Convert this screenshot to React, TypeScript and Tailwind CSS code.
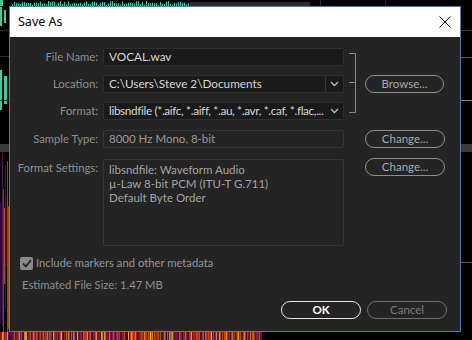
import React from "react";

// tiny deterministic noise so the background stripes look the same every run
function noise(i: number) {
  const x = Math.sin(i * 12.9898 + 78.233) * 43758.5453;
  return x - Math.floor(x);
}

const heat = ["#f5a623", "#e8541c", "#b3124d", "#7a1a6e", "#ff8a1f", "#d93a1a", "#4a1460"];

function TopStrip() {
  const spikes = Array.from({ length: 90 }, (_, i) => i);
  return (
    <svg width="472" height="6" className="block">
      <rect width="472" height="6" fill="#000" />
      <rect x="0" y="0" width="3" height="6" fill="#3fc9a0" />
      {spikes.map((i) => {
        const h = 1 + noise(i) * 4;
        return <rect key={i} x={12 + i * 2} y={6 - h} width="1" height={h} fill="#3fc9a0" />;
      })}
      <rect x="190" y="2" width="120" height="4" fill="#2c2c2c" />
      <rect x="320" y="0" width="1" height="6" fill="#2a2a2a" />
      <rect x="385" y="0" width="1" height="6" fill="#2a2a2a" />
    </svg>
  );
}

function LeftStrip() {
  const cols = Array.from({ length: 9 }, (_, i) => i);
  return (
    <svg width="9" height="326" className="block">
      <rect width="9" height="326" fill="#000" />
      <rect x="0" y="1" width="2" height="19" fill="#3fc9a0" />
      <rect x="4" y="4" width="2" height="13" fill="#3fc9a0" />
      <rect x="0" y="64" width="2" height="40" fill="#3fc9a0" />
      <rect x="4" y="70" width="3" height="28" fill="#3fc9a0" />
      <rect x="0" y="24" width="9" height="1" fill="#2a2a2a" />
      <rect x="0" y="50" width="9" height="1" fill="#2a2a2a" />
      <rect x="0" y="94" width="9" height="1" fill="#2a2a2a" />
      <rect x="0" y="138" width="9" height="8" fill="#3a3a3a" />
      {cols.map((i) => (
        <rect
          key={i}
          x={i}
          y={146 + Math.floor(noise(i + 20) * 60)}
          width="1"
          height={60 + Math.floor(noise(i + 60) * 120)}
          fill={heat[Math.floor(noise(i + 700) * heat.length)]}
          opacity={0.35 + noise(i + 900) * 0.5}
        />
      ))}
    </svg>
  );
}

function RightStrip() {
  return (
    <svg width="11" height="326" className="block">
      <rect width="11" height="326" fill="#000" />
      <rect x="0" y="24" width="11" height="1" fill="#2e3a34" />
      <rect x="0" y="51" width="11" height="1" fill="#5a5a5a" />
      <rect x="0" y="94" width="11" height="1" fill="#7a8a80" />
      <rect x="0" y="138" width="11" height="8" fill="#3a3a3a" />
      <rect x="0" y="256" width="11" height="1" fill="#5a5a5a" />
    </svg>
  );
}

function BottomStrip() {
  const cols = Array.from({ length: 262 }, (_, i) => i);
  return (
    <svg width="472" height="8" className="block">
      <rect width="472" height="8" fill="#000" />
      {cols.map((i) => (
        <rect
          key={i}
          x={i}
          y="0"
          width="1"
          height="8"
          fill={heat[Math.floor(noise(i + 40) * heat.length)]}
          opacity={0.5 + noise(i + 90) * 0.5}
        />
      ))}
    </svg>
  );
}

function Chevron() {
  return (
    <svg width="9" height="6" viewBox="0 0 9 6" fill="none">
      <path d="M1 1 L4.5 4.5 L8 1" stroke="#bdbdbd" strokeWidth="1.3" />
    </svg>
  );
}

function PillButton({ children, tone = "normal" }: { children: React.ReactNode; tone?: "normal" | "primary" | "muted" }) {
  const cls =
    tone === "primary"
      ? "border-[#e6e6e6] text-white font-bold"
      : tone === "muted"
      ? "border-[#6e6e6e] text-[#7c7c7c]"
      : "border-[#8e8e8e] text-[#a9a9a9]";
  return (
    <button className={`w-[80px] h-[18px] rounded-full border-[1.5px] flex items-center justify-center text-[11.5px] leading-none ${cls}`}>
      {children}
    </button>
  );
}

export default function App() {
  const label = "text-right pr-[5px] text-[#8f8f8f] text-[11.25px] leading-[18px] whitespace-nowrap";
  const darkBox = "h-[18px] bg-[#1a1a1a] border border-[#2f2f2f] rounded-[2px] flex items-center text-[#d6d6d6] text-[11.75px]";

  return (
    <div className="w-[472px] h-[340px] bg-black overflow-hidden flex flex-col font-['Lato','Open_Sans',sans-serif]">
      <TopStrip />
      <div className="flex">
        <LeftStrip />
        <div className="w-[452px] h-[326px] border border-[#4f7fae] bg-[#242424] flex flex-col">
          {/* Title bar */}
          <div className="h-[30px] bg-white flex items-center justify-between pl-[8px] pr-[9px]">
            <span className="text-[12.5px] text-black font-['Segoe_UI','Noto_Sans',sans-serif]">Save As</span>
            <svg width="12" height="12" viewBox="0 0 12 12">
              <path d="M0.5 0.5 L11.5 11.5 M11.5 0.5 L0.5 11.5" stroke="#111" strokeWidth="1" />
            </svg>
          </div>

          {/* Fields */}
          <div className="mt-[11px] grid grid-cols-[93px_241px_21px_79px] grid-rows-[18px_18px_18px_19px_89px] gap-y-[9px]">
            <div className={`${label} col-start-1 row-start-1`}>File Name:</div>
            <div className={`${darkBox} col-start-2 row-start-1 pl-[5px]`}>VOCAL.wav</div>

            <div className={`${label} col-start-1 row-start-2`}>Location:</div>
            <div className={`${darkBox} col-start-2 row-start-2 pl-[5px]`}>
              <span className="flex-1">C:\Users\Steve 2\Documents</span>
              <span className="w-[18px] h-full border-l border-[#353535] flex items-center justify-center">
                <Chevron />
              </span>
            </div>

            <div className={`${label} col-start-1 row-start-3`}>Format:</div>
            <div className={`${darkBox} col-start-2 row-start-3 pl-[5px]`}>
              <span className="flex-1 min-w-0 whitespace-nowrap overflow-hidden tracking-[-0.35px]">libsndfile (*.aifc, *.aiff, *.au, *.avr, *.caf, *.flac,...</span>
              <span className="w-[18px] shrink-0 flex items-center justify-center">
                <Chevron />
              </span>
            </div>

            {/* bracket joining the three rows to Browse */}
            <div className="col-start-3 row-start-1 row-span-3 flex items-start pt-[5px] pl-[5px]">
              <svg width="10" height="61" viewBox="0 0 10 61" fill="none">
                <path d="M0 0.5 H6.5 V59.5 H0 M0 29.5 H6.5" stroke="#8a8a8a" strokeWidth="1" />
              </svg>
            </div>
            <div className="col-start-4 row-start-2 flex items-center">
              <PillButton>Browse...</PillButton>
            </div>

            <div className={`${label} col-start-1 row-start-4 self-end`}>Sample Type:</div>
            <div className="col-start-2 row-start-4 self-end h-[18px] border border-[#363636] rounded-[2px] flex items-center pl-[5px] text-[11.5px] text-[#9a9a9a]">
              8000 Hz Mono, 8-bit
            </div>
            <div className="col-start-4 row-start-4 self-end">
              <PillButton>Change...</PillButton>
            </div>

            <div className={`${label} col-start-1 row-start-5 mt-[2px]`}>Format Settings:</div>
            <div className="col-start-2 row-start-5 mt-[2px] h-[87px] border border-[#363636] rounded-[2px] pl-[5px] pt-[3px] text-[11.5px] leading-[14px] text-[#a3a3a3]">
              <div>libsndfile: Waveform Audio</div>
              <div>µ-Law 8-bit PCM (ITU-T G.711)</div>
              <div>Default Byte Order</div>
            </div>
            <div className="col-start-4 row-start-5 mt-[1px]">
              <PillButton>Change...</PillButton>
            </div>
          </div>

          {/* Metadata checkbox */}
          <div className="mt-[10px] pl-[10px] flex items-center gap-[3px]">
            <span className="w-[13px] h-[13px] rounded-[2px] bg-[#8a8a8a] flex items-center justify-center">
              <svg width="10" height="9" viewBox="0 0 10 9" fill="none">
                <path d="M1 4.5 L3.8 7.3 L9 1.2" stroke="#262626" strokeWidth="1.8" />
              </svg>
            </span>
            <span className="text-[11.25px] text-[#959595] leading-[14px]">Include markers and other metadata</span>
          </div>

          <div className="mt-[8px] pl-[12px] text-[11.25px] leading-[14px] text-[#8f8f8f]">Estimated File Size: 1.47 MB</div>

          {/* Footer buttons */}
          <div className="mt-[9px] flex justify-end gap-[6px] pr-[13px]">
            <PillButton tone="primary">OK</PillButton>
            <PillButton tone="muted">Cancel</PillButton>
          </div>
        </div>
        <RightStrip />
      </div>
      <BottomStrip />
    </div>
  );
}
